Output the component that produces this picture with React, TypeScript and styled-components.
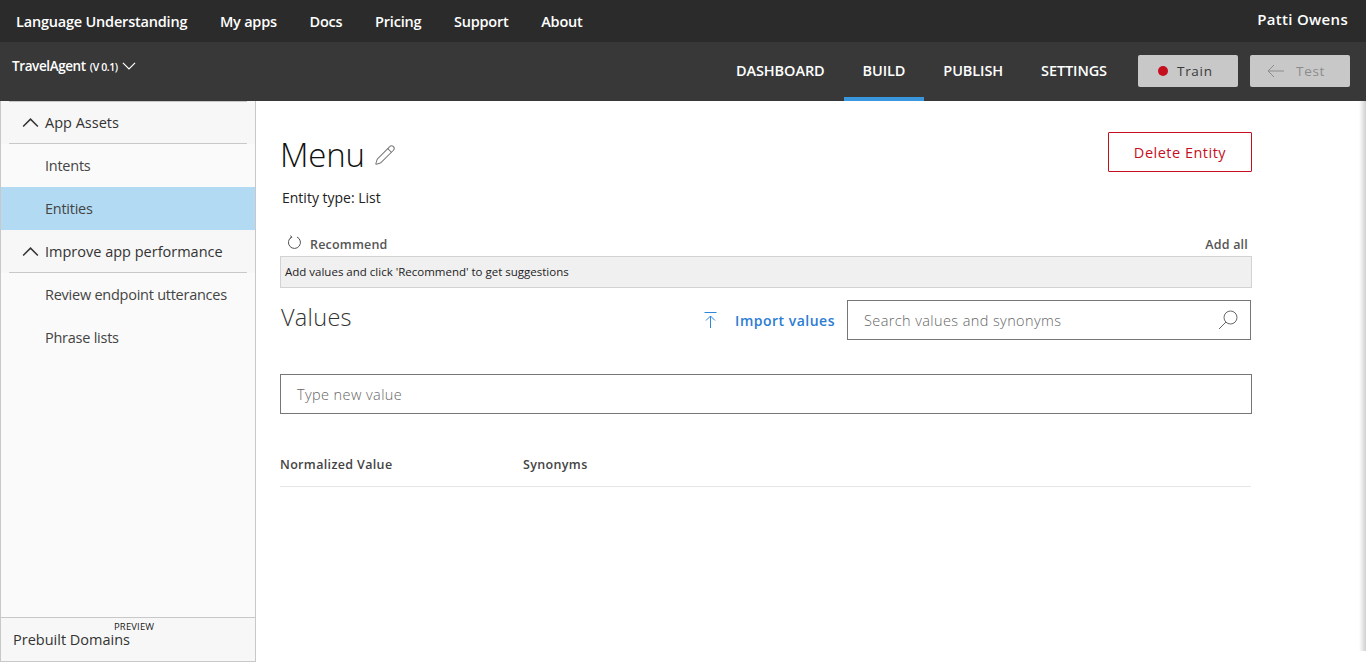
import styled, { createGlobalStyle } from 'styled-components';
import { Pencil } from 'lucide-react';

const GlobalStyle = createGlobalStyle`
  html, body {
    margin: 0;
    padding: 0;
    height: 100%;
    background: #fff;
    font-family: 'Open Sans', 'Noto Sans', sans-serif;
    overflow: hidden;
  }
  #root {
    height: 100%;
  }
  * {
    box-sizing: border-box;
  }
`;

const Page = styled.div`
  display: flex;
  flex-direction: column;
  height: 662px;
`;

const TopBar = styled.header`
  display: flex;
  align-items: center;
  justify-content: space-between;
  height: 42px;
  flex-shrink: 0;
  padding: 0 18px 0 16px;
  background: #2b2b2b;
  color: #fff;
`;

const TopLinks = styled.nav`
  display: flex;
  gap: 32.6px;
`;

const TopLink = styled.a`
  font-size: 14.5px;
  font-weight: 600;
  letter-spacing: -0.2px;
  color: #fff;
`;

const UserName = styled.span`
  font-size: 15px;
  font-weight: 600;
  letter-spacing: 0.3px;
  margin-top: -4px;
`;

const AppBar = styled.div`
  display: flex;
  justify-content: space-between;
  height: 59px;
  flex-shrink: 0;
  background: #383838;
  color: #fff;
`;

const AppName = styled.div`
  display: flex;
  align-items: center;
  gap: 4px;
  height: 48px;
  padding-left: 12px;
  font-size: 13.5px;
  font-weight: 600;
  letter-spacing: -0.4px;
`;

const AppVersion = styled.span`
  margin-top: 1px;
  font-size: 10.5px;
`;

const AppNav = styled.div`
  display: flex;
  align-items: flex-start;
  padding-right: 16px;
`;

const Tab = styled.a<{ $active?: boolean }>`
  display: flex;
  align-items: center;
  justify-content: center;
  height: 59px;
  padding: 2px 19px 0;
  border-bottom: 4px solid ${p => (p.$active ? '#3a96dd' : 'transparent')};
  font-size: 14.5px;
  font-weight: 600;
  letter-spacing: -0.1px;
  color: #fff;
`;

const ActionButton = styled.button<{ $disabled?: boolean }>`
  display: flex;
  align-items: center;
  width: 100px;
  height: 32px;
  margin-top: 13px;
  margin-left: 12px;
  padding-left: ${p => (p.$disabled ? '17px' : '20px')};
  border: none;
  border-radius: 2px;
  background: #c8c8c8;
  font-family: inherit;
  font-size: 13.5px;
  letter-spacing: 0.7px;
  color: ${p => (p.$disabled ? '#8c8c8c' : '#3a3a3a')};
`;

const RedDot = styled.span`
  width: 10px;
  height: 10px;
  margin-right: 9px;
  border-radius: 50%;
  background: #c50f1f;
`;

const ArrowIcon = styled.svg`
  margin-right: 12px;
`;

const Body = styled.div`
  display: flex;
  flex: 1;
  min-height: 0;
`;

const Sidebar = styled.aside`
  display: flex;
  flex-direction: column;
  justify-content: space-between;
  width: 256px;
  flex-shrink: 0;
  border-left: 1px solid #c8c8c8;
  border-right: 1px solid #c8c8c8;
  border-bottom: 1px solid #c8c8c8;
  background: #fafafa;
`;

const SideGroup = styled.div`
  padding: 0 8px;
  background: #f7f7f7;
`;

const SideGroupHead = styled.div<{ $first?: boolean }>`
  display: flex;
  align-items: center;
  gap: 6px;
  height: 43px;
  padding-left: 13px;
  border-top: ${p => (p.$first ? '1px solid #c8c8c8' : 'none')};
  border-bottom: 1px solid #c8c8c8;
  font-size: 14.5px;
  color: #333;
`;

const SideItem = styled.div<{ $active?: boolean }>`
  display: flex;
  align-items: center;
  height: 43px;
  padding-left: 44px;
  background: ${p => (p.$active ? '#b2dbf3' : 'transparent')};
  font-size: 14.5px;
  letter-spacing: -0.25px;
  color: #444;
`;

const DomainsTab = styled.div`
  position: relative;
  height: 44px;
  padding: 12px 0 0 12px;
  border-top: 1px solid #c8c8c8;
  background: #f7f7f7;
  font-size: 14.5px;
  color: #333;
`;

const PreviewTag = styled.span`
  position: absolute;
  top: 2px;
  left: 113px;
  font-size: 9.5px;
  letter-spacing: 0.15px;
  color: #222;
`;

const Main = styled.main`
  flex: 1;
  padding-left: 24px;
  background: linear-gradient(to left, #cfcfcf, #fff 7px) no-repeat;
  background-size: 100% 550px;
`;

const Content = styled.div`
  width: 972px;
`;

const TitleRow = styled.div`
  display: flex;
  align-items: flex-start;
  justify-content: space-between;
  padding-top: 31px;
`;

const TitleGroup = styled.div`
  display: flex;
  align-items: center;
  gap: 9px;
`;

const Title = styled.h1`
  margin: 0;
  font-size: 33px;
  font-weight: 300;
  line-height: 46px;
  letter-spacing: -0.2px;
  color: #111;
`;

const DeleteButton = styled.button`
  width: 144px;
  height: 40px;
  border: 1px solid #c50f1f;
  border-radius: 1px;
  background: #fff;
  font-family: inherit;
  font-size: 14.5px;
  letter-spacing: 0.5px;
  color: #c50f1f;
`;

const EntityType = styled.p`
  margin: 10px 0 0 2px;
  font-size: 14px;
  line-height: 20px;
  color: #222;
`;

const RecommendRow = styled.div`
  display: flex;
  align-items: center;
  justify-content: space-between;
  height: 24px;
  margin-top: 24px;
  padding: 0 4px 0 7px;
  font-size: 12.5px;
  font-weight: 600;
  letter-spacing: 0.2px;
  color: #555;
`;

const RecommendLabel = styled.span`
  display: flex;
  align-items: center;
  gap: 8px;
`;

const RecommendIcon = styled.svg`
  margin-top: -4px;
`;

const SuggestionBox = styled.div`
  display: flex;
  align-items: center;
  height: 32px;
  padding: 0 0 1px 4px;
  border: 1px solid #d2d2d2;
  background: #f0f0f0;
  font-size: 11.5px;
  color: #222;
`;

const ValuesRow = styled.div`
  display: flex;
  align-items: flex-start;
  justify-content: space-between;
  padding-top: 12px;
`;

const SectionTitle = styled.h2`
  margin: 0 0 0 1px;
  font-size: 23.5px;
  font-weight: 300;
  line-height: 34px;
  letter-spacing: 0.3px;
  color: #333;
`;

const ValuesTools = styled.div`
  display: flex;
  align-items: center;
  margin-right: 1px;
`;

const ImportLink = styled.a`
  display: flex;
  align-items: center;
  gap: 18px;
  margin-right: 12px;
  font-size: 14px;
  font-weight: 600;
  letter-spacing: 0.5px;
  color: #2b7cd3;
`;

const Field = styled.div<{ $wide?: boolean }>`
  display: flex;
  align-items: center;
  justify-content: space-between;
  width: ${p => (p.$wide ? '100%' : '404px')};
  height: 40px;
  padding: 0 11px 0 16px;
  border: 1px solid #767676;
  font-size: 14.5px;
  font-weight: 300;
  letter-spacing: 0.4px;
  color: #666;
`;

const NewValueField = styled(Field)`
  margin-top: 34px;
`;

const TableHead = styled.div`
  display: grid;
  grid-template-columns: 243px 1fr;
  height: 47px;
  margin: 26px 1px 0 0;
  padding-top: 16px;
  border-bottom: 1px solid #e6e6e6;
  font-size: 12.5px;
  font-weight: 600;
  line-height: 18px;
  letter-spacing: 0.35px;
  color: #444;
`;

const Chevron = ({ up, size }: { up?: boolean; size: number }) => (
  <svg width={size} height={size * 0.62} viewBox="0 0 16 10" fill="none" stroke="currentColor" strokeWidth="1.4">
    <path d={up ? 'M1 9 L8 2 L15 9' : 'M1 1 L8 8 L15 1'} />
  </svg>
);

export default function App() {
  return (
    <Page>
      <GlobalStyle />
      <TopBar>
        <TopLinks>
          <TopLink>Language Understanding</TopLink>
          <TopLink>My apps</TopLink>
          <TopLink>Docs</TopLink>
          <TopLink>Pricing</TopLink>
          <TopLink>Support</TopLink>
          <TopLink>About</TopLink>
        </TopLinks>
        <UserName>Patti Owens</UserName>
      </TopBar>
      <AppBar>
        <AppName>
          TravelAgent <AppVersion>(V 0.1)</AppVersion>
          <Chevron size={14} />
        </AppName>
        <AppNav>
          <Tab>DASHBOARD</Tab>
          <Tab $active>BUILD</Tab>
          <Tab>PUBLISH</Tab>
          <Tab>SETTINGS</Tab>
          <ActionButton>
            <RedDot />
            Train
          </ActionButton>
          <ActionButton $disabled>
            <ArrowIcon width="17" height="14" viewBox="0 0 17 14" fill="none" stroke="#8c8c8c">
              <path d="M17 7 H1 M7 1 L1 7 L7 13" />
            </ArrowIcon>
            Test
          </ActionButton>
        </AppNav>
      </AppBar>
      <Body>
        <Sidebar>
          <div>
            <SideGroup>
              <SideGroupHead $first>
                <Chevron up size={17} />
                App Assets
              </SideGroupHead>
            </SideGroup>
            <SideItem>Intents</SideItem>
            <SideItem $active>Entities</SideItem>
            <SideGroup>
              <SideGroupHead>
                <Chevron up size={17} />
                Improve app performance
              </SideGroupHead>
            </SideGroup>
            <SideItem>Review endpoint utterances</SideItem>
            <SideItem>Phrase lists</SideItem>
          </div>
          <DomainsTab>
            <PreviewTag>PREVIEW</PreviewTag>
            Prebuilt Domains
          </DomainsTab>
        </Sidebar>
        <Main>
          <Content>
            <TitleRow>
              <TitleGroup>
                <Title>Menu</Title>
                <Pencil size={22} strokeWidth={1.1} color="#777" />
              </TitleGroup>
              <DeleteButton>Delete Entity</DeleteButton>
            </TitleRow>
            <EntityType>Entity type: List</EntityType>
            <RecommendRow>
              <RecommendLabel>
                <RecommendIcon width="15" height="15" viewBox="0 0 15 15" fill="none" stroke="#555">
                  <path d="M4.5 2.2 A6 6 0 1 0 10 2" />
                  <path d="M3.6 0.5 L4.8 2.4 L2.8 3.4" />
                </RecommendIcon>
                Recommend
              </RecommendLabel>
              <span>Add all</span>
            </RecommendRow>
            <SuggestionBox>Add values and click 'Recommend' to get suggestions</SuggestionBox>
            <ValuesRow>
              <SectionTitle>Values</SectionTitle>
              <ValuesTools>
                <ImportLink>
                  <svg width="13" height="18" viewBox="0 0 13 18" fill="none" stroke="#2b88d8">
                    <path d="M0.5 1.5 H12.5 M6.5 17 V5 M2 9.5 L6.5 5 L11 9.5" />
                  </svg>
                  Import values
                </ImportLink>
                <Field>
                  Search values and synonyms
                  <svg width="22" height="22" viewBox="0 0 22 22" fill="none" stroke="#666">
                    <circle cx="13.5" cy="8.5" r="6.5" />
                    <path d="M9 13 L2 20" />
                  </svg>
                </Field>
              </ValuesTools>
            </ValuesRow>
            <NewValueField $wide>Type new value</NewValueField>
            <TableHead>
              <span>Normalized Value</span>
              <span>Synonyms</span>
            </TableHead>
          </Content>
        </Main>
      </Body>
    </Page>
  );
}
